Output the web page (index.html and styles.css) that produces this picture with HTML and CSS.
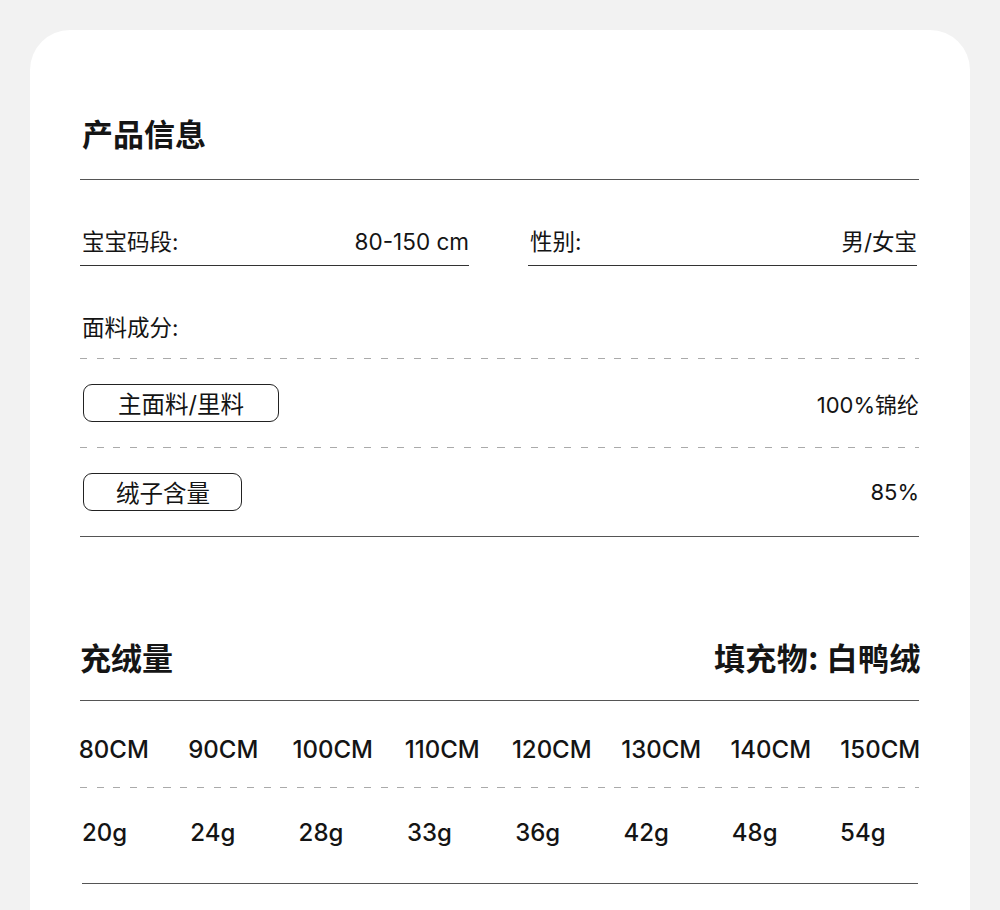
FILE: index.html
```html
<!DOCTYPE html>
<html lang="zh-CN">
<head>
<meta charset="utf-8">
<title>产品信息</title>
<link rel="stylesheet" href="styles.css">
</head>
<body>
<div class="card">
  <section class="info">
    <h2 class="title head-line">产品信息</h2>
    <div class="fields">
      <div class="field"><span>宝宝码段:</span><span class="val">80-150 cm</span></div>
      <div class="field"><span>性别:</span><span>男/女宝</span></div>
    </div>
    <div class="fabric-label">面料成分:</div>
    <div class="dash"></div>
    <div class="mat-row"><span class="pill">主面料/里料</span><span class="val">100%锦纶</span></div>
    <div class="dash"></div>
    <div class="mat-row solid"><span class="pill pill-narrow">绒子含量</span><span class="val">85%</span></div>
  </section>
  <section class="fill">
    <div class="fill-head head-line">
      <h2 class="title">充绒量</h2>
      <h2 class="title">填充物: 白鸭绒</h2>
    </div>
    <div class="size-grid sizes">
      <span>80CM</span><span>90CM</span><span>100CM</span><span>110CM</span><span>120CM</span><span>130CM</span><span>140CM</span><span>150CM</span>
    </div>
    <div class="dash"></div>
    <div class="size-grid weights">
      <span>20g</span><span>24g</span><span>28g</span><span>33g</span><span>36g</span><span>42g</span><span>48g</span><span>54g</span>
    </div>
  </section>
</div>
</body>
</html>
```
FILE: styles.css
```css
html, body {
  margin: 0;
  padding: 0;
  background: #f2f2f2;
}
body {
  font-family: Inter, "Noto Sans CJK SC", sans-serif;
  color: #141414;
  height: 910px;
  overflow: hidden;
}
.card {
  margin: 30px 30px 0;
  background: #fff;
  border-radius: 40px 40px 0 0;
  padding: 85px 51px 60px 50px;
  min-height: 900px;
}
.title {
  margin: 0;
  font-family: "Noto Sans CJK SC", sans-serif;
  font-weight: 700;
  font-size: 31px;
  line-height: 36px;
  color: #151515;
}
.info > .title {
  padding-left: 2px;
}
.head-line {
  padding-bottom: 28px;
  border-bottom: 1px solid #555;
}
.fields {
  display: grid;
  grid-template-columns: 389px 389px;
  column-gap: 59px;
  margin-top: 47px;
}
.field {
  display: flex;
  justify-content: space-between;
  align-items: center;
  font-size: 22.5px;
  line-height: 30px;
  padding: 0 0 8px 2px;
  border-bottom: 1px solid #333;
}
.fabric-label {
  margin-top: 47px;
  font-size: 22.5px;
  line-height: 30px;
  padding: 0 0 15px 2px;
}
.dash {
  height: 1px;
  background: repeating-linear-gradient(90deg, #aaa 0 7px, transparent 7px 16.7px);
}
.mat-row {
  display: flex;
  justify-content: space-between;
  align-items: center;
  padding: 25px 0;
  font-size: 22px;
}
.mat-row.solid {
  border-bottom: 1px solid #555;
}
.pill {
  margin-left: 3px;
  height: 36px;
  padding: 0 34px;
  border: 1px solid #222;
  border-radius: 9px;
  display: inline-flex;
  align-items: center;
  font-size: 23.5px;
}
.pill-narrow {
  padding: 0 31px 0 32px;
}
.fill {
  margin-top: 102px;
}
.fill-head {
  display: flex;
  justify-content: space-between;
  padding-bottom: 25px;
}
.fill-head .title:last-child {
  margin-right: -2px;
  letter-spacing: 0.5px;
}
.size-grid {
  display: grid;
  font-size: 24px;
  line-height: 30px;
  font-weight: 500;
}
.sizes {
  grid-template-columns: repeat(8, 109.5px);
  justify-items: center;
  padding: 34px 0 22px 0;
  margin-left: -21px;
  margin-right: -15px;
}
.weights {
  grid-template-columns: repeat(7, 108.3px) auto;
  padding: 30px 0 35px 0;
  margin: 0 1px 0 2px;
  border-bottom: 1px solid #555;
}
```
